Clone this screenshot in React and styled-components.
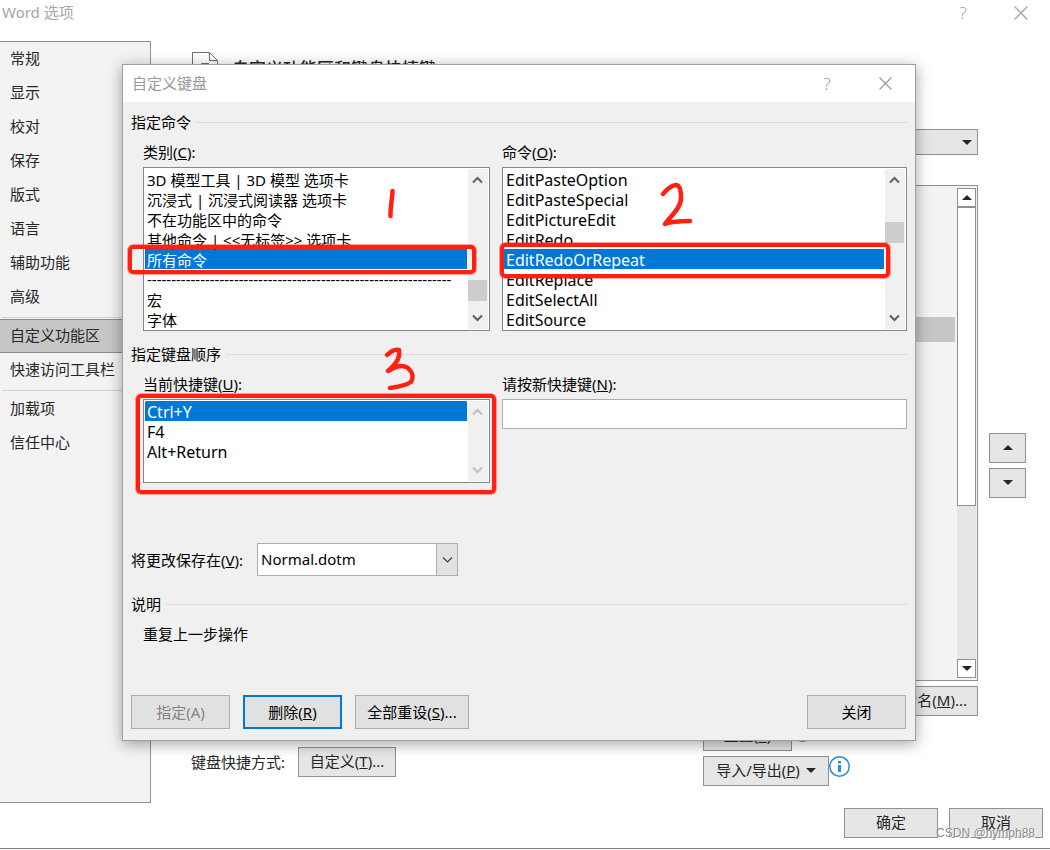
import React from 'react'
import styled, { createGlobalStyle } from 'styled-components'

const GlobalStyle = createGlobalStyle`
* {
  box-sizing: border-box;
}
body {
  margin: 0;
  background: #fff;
}
body, button, input, select {
  font-family: "Noto Sans", "Noto Sans CJK SC", sans-serif;
  font-size: 15px;
  line-height: 20px;
}
`
const Page = styled.div`
position: relative;
overflow: hidden;
border-bottom: 1px solid #808080;
padding-bottom: 10px;
color: #262626;
`
const TitleBar = styled.header`
display: flex;
align-items: center;
height: ${({$height}) => $height}px;
padding: ${({$pad}) => $pad};
background: #fff;
color: ${({$color}) => $color};
`
const Title = styled.h1`
flex: 1;
margin: 0;
padding-bottom: 2px;
font-size: 15px;
font-weight: normal;
`
const TitleButton = styled.button`
display: flex;
align-items: center;
justify-content: center;
width: 58px;
height: 24px;
padding: 0;
border: none;
background: none;
color: inherit;
font-size: 17px;
font-weight: 300;
`
const Columns = styled.div`
display: flex;
`
const Sidebar = styled.nav`
width: 151px;
min-height: 762px;
border: 1px solid #919191;
border-left: none;
background: #f3f3f3;
`
const NavItem = styled.a`
display: flex;
align-items: center;
height: 34px;
padding: 0 10px 2px;
color: #262626;
text-decoration: none;
white-space: nowrap;
border: solid ${({$active}) => $active ? '#8a8a8a' : 'transparent'};
border-width: 1px 0;
background: ${({$active}) => $active ? '#c6c6c6' : 'none'};
`
const NavLine = styled.hr`
height: 1px;
margin: 3px 2px 1px;
border: none;
background: #d1d1d1;
`
const Main = styled.main`
flex: 1;
padding: 11px 24px 17px 40px;
`
const Heading = styled.div`
display: flex;
align-items: center;
gap: 13px;
height: 34px;
margin-bottom: 43px;
`
const HeadingText = styled.h2`
margin: 0;
font-size: 17px;
font-weight: 500;
`
const Shortcuts = styled.div`
display: flex;
flex: 1;
align-items: center;
align-self: flex-end;
gap: 13px;
margin-bottom: 9px;
`
const RibbonColumn = styled.div`
display: flex;
flex-direction: column;
gap: 5px;
width: 275px;
`
const SelectBox = styled.div`
position: relative;
margin-bottom: 25px;
svg {
  position: absolute;
  right: 6px;
  top: 11px;
  pointer-events: none;
}
`
const FlatSelect = styled.select`
display: block;
width: 100%;
height: 26px;
padding: 0 8px;
appearance: none;
border: 1px solid #919191;
border-radius: 0;
background: #e6e6e6;
color: #262626;
`
const Tree = styled.div`
display: flex;
height: 496px;
padding: 2px 1px 2px 2px;
border: 1px solid #919191;
background: #f3f3f3;
`
const TreeRows = styled.div`
flex: 1;
padding: 129px 2px 0 0;
`
const TreeRow = styled.div`
height: 25px;
background: #c6c6c6;
`
const TreeScroll = styled.div`
display: flex;
flex-direction: column;
width: 19px;
background: #e6e6e6;
`
const TreeArrow = styled.button`
display: flex;
align-items: center;
justify-content: center;
height: 19px;
padding: 0;
border: 1px solid #919191;
background: #fff;
`
const TreeThumb = styled.div`
flex: 1;
margin-bottom: 153px;
border: 1px solid #919191;
background: #fff;
`
const Row = styled.div`
display: flex;
align-items: flex-start;
justify-content: ${({$end}) => $end ? 'flex-end' : 'flex-start'};
`
const FlatButton = styled.button`
display: flex;
align-items: center;
justify-content: center;
gap: 6px;
height: 30px;
min-width: ${({$width}) => $width || 0}px;
padding: 0 10px 2px;
border: 1px solid #919191;
background: #e6e6e6;
color: #262626;
white-space: nowrap;
`
const MoveColumn = styled.div`
display: flex;
flex-direction: column;
gap: 5px;
width: 37px;
margin: 304px 0 0 11px;
`
const Footer = styled.footer`
display: flex;
justify-content: flex-end;
gap: 11px;
padding: 5px 7px 0 0;
`
const Dialog = styled.section`
position: absolute;
top: 64px;
left: 122px;
right: 134px;
border: 1px solid #9e9e9e;
background: #f0f0f0;
box-shadow: 0 3px 14px rgba(0, 0, 0, 0.36);
color: #000;
`
const DialogBody = styled.div`
padding: 10px 8px 11px;
`
const Legend = styled.div`
display: flex;
align-items: center;
gap: 5px;
height: 20px;
margin-top: ${({$top}) => $top || 0}px;
&::after {
  content: "";
  flex: 1;
  height: 1px;
  background: #dcdcdc;
}
`
const Fields = styled.div`
display: grid;
grid-template-columns: minmax(0, 347fr) minmax(0, 405fr);
gap: 12px;
padding: 10px 0 0 12px;
`
const Label = styled.label`
display: block;
height: 20px;
margin-bottom: ${({$gap}) => $gap || 0}px;
white-space: nowrap;
`
const ListFrame = styled.div`
display: flex;
padding: 1px;
border: 1px solid #828790;
background: #fff;
`
const List = styled.select`
flex: 1;
min-width: 0;
height: ${({size}) => size * 20}px;
margin-right: 1px;
padding: 0;
border: none;
outline: none;
overflow: hidden;
background: #fff;
font-size: ${({$latin}) => $latin ? 16 : 15}px;
option {
  height: 20px;
  min-height: 20px;
  padding: ${({$latin}) => $latin ? '0 2px' : '0 2px 2px'};
  line-height: ${({$latin}) => $latin ? 20 : 18}px;
  white-space: nowrap;
  color: #000;
}
option:checked {
  background: #0078d7 linear-gradient(#0078d7, #0078d7);
  -webkit-text-fill-color: #fff;
}
`
const ScrollBar = styled.div`
display: flex;
flex-direction: column;
align-items: center;
justify-content: space-between;
width: 20px;
padding: 7px 1px 7px 0;
background: #f0f0f0;
color: ${({$off}) => $off ? '#bfbfbf' : '#606060'};
`
const Thumb = styled.div`
width: 19px;
height: 21px;
margin-top: ${({$push}) => $push}px;
margin-bottom: auto;
background: #cdcdcd;
`
const KeyInput = styled.input`
display: block;
width: 100%;
height: 30px;
padding: 0 4px;
border: 1px solid #abadb3;
border-radius: 0;
background: #fff;
`
const SaveRow = styled.div`
display: flex;
align-items: center;
gap: 14px;
margin-top: 60px;
`
const SaveBox = styled.div`
position: relative;
width: 201px;
`
const SaveSelect = styled.select`
display: block;
width: 100%;
height: 33px;
padding: 0 3px 2px;
appearance: none;
border: 1px solid #adadad;
border-radius: 0;
background: #fff;
color: #000;
`
const SaveArrow = styled.span`
position: absolute;
top: 0;
right: 0;
bottom: 0;
display: flex;
align-items: center;
justify-content: center;
width: 22px;
border: 1px solid #adadad;
background: #e1e1e1;
color: #404040;
pointer-events: none;
`
const Description = styled.p`
margin: 10px 12px 51px;
`
const Actions = styled.div`
display: flex;
gap: 13px;
padding-right: 1px;
`
const DialogButton = styled.button`
min-width: ${({$width}) => $width || 99}px;
height: 34px;
padding: 0 10px;
border: ${({$focus}) => $focus ? '2px solid #0078d7' : '1px solid #adadad'};
background: #e1e1e1;
color: #000;
white-space: nowrap;
&:disabled {
  color: #838383;
}
&:last-child {
  margin-left: auto;
}
`
const Marks = styled.div`
position: absolute;
inset: 0;
pointer-events: none;
svg {
  position: absolute;
  top: 0;
  left: 0;
}
`
const MarkBox = styled.div`
position: absolute;
left: ${({$x}) => $x}px;
top: ${({$y}) => $y}px;
width: ${({$w}) => $w}px;
height: ${({$h}) => $h}px;
border: 4px solid #ff2012;
border-radius: 5px;
box-shadow: 0 0 0 1px rgba(255, 32, 18, 0.4);
`
const Watermark = styled.span`
position: absolute;
right: 15px;
bottom: 7px;
font-family: "Liberation Sans", sans-serif;
font-size: 12px;
line-height: 16px;
color: #8c8c8c;
text-shadow: 1px 1px 0 #fff;
`

const Triangle = ({up}) => (
  <svg width="10" height="5" viewBox="0 0 10 5">
    <path d={up ? 'M0 5L5 0L10 5Z' : 'M0 0L5 5L10 0Z'} fill="#262626" />
  </svg>
)

const Chevron = ({up, thin}) => (
  <svg width="11" height="8" viewBox="0 0 11 8">
    <path d={up ? 'M1 6.5L5.5 2L10 6.5' : 'M1 1.5L5.5 6L10 1.5'} fill="none" stroke="currentColor" strokeWidth={thin ? 1.2 : 2} />
  </svg>
)

const Cross = ({size}) => (
  <svg width={size} height={size} viewBox="0 0 13 13">
    <path d="M0.5 0.5L12.5 12.5M12.5 0.5L0.5 12.5" fill="none" stroke="currentColor" strokeWidth="1.2" />
  </svg>
)

const PageIcon = () => (
  <svg width="28" height="34" viewBox="0 0 28 34">
    <path d="M1.500 33.500V0.500H18.500L26.500 8.500V33.500ZM18.500 0.500V8.500H26.500" fill="#fff" stroke="#6e6e6e" />
    <path d="M10.500 18V11.500H17.500V18" fill="none" stroke="#6e6e6e" />
  </svg>
)

const Info = () => (
  <svg width="21" height="21" viewBox="0 0 21 21">
    <circle cx="10.5" cy="10.5" r="9.7" fill="#fff" stroke="#2e8fd0" strokeWidth="1.5" />
    <path d="M9 5H12V7.5H9ZM9 9H12V16H9Z" fill="#2e8fd0" />
  </svg>
)

const navGroups = [
  ['常规', '显示', '校对', '保存', '版式', '语言', '辅助功能', '高级'],
  ['自定义功能区', '快速访问工具栏'],
  ['加载项', '信任中心'],
]

const categories = [
  '3D 模型工具 | 3D 模型 选项卡',
  '沉浸式 | 沉浸式阅读器 选项卡',
  '不在功能区中的命令',
  '其他命令 | <<无标签>> 选项卡',
  '所有命令',
  '-'.repeat(63),
  '宏',
  '字体',
]

const commands = [
  'EditPasteOption',
  'EditPasteSpecial',
  'EditPictureEdit',
  'EditRedo',
  'EditRedoOrRepeat',
  'EditReplace',
  'EditSelectAll',
  'EditSource',
]

const ListBox = ({id, items, value, rows, push, latin}) => (
  <ListFrame>
    <List id={id} size={rows} defaultValue={value} $latin={latin}>
      {items.map((item) => <option key={item} value={item}>{item}</option>)}
    </List>
    <ScrollBar $off={push === undefined}>
      <Chevron up />
      {push !== undefined && <Thumb $push={push} />}
      <Chevron />
    </ScrollBar>
  </ListFrame>
)

const KeyboardDialog = () => (
  <Dialog role="dialog" aria-label="自定义键盘">
    <TitleBar $height={37} $pad="0 1px 0 9px" $color="#999">
      <Title as="h3">自定义键盘</Title>
      <TitleButton>?</TitleButton>
      <TitleButton aria-label="关闭窗口"><Cross size={13} /></TitleButton>
    </TitleBar>
    <DialogBody>
      <Legend>指定命令</Legend>
      <Fields>
        <div>
          <Label htmlFor="category" $gap={5}>类别(<u>C</u>):</Label>
          <ListBox id="category" items={categories} value="所有命令" rows={8} push={96} />
        </div>
        <div>
          <Label htmlFor="command" $gap={5}>命令(<u>O</u>):</Label>
          <ListBox id="command" items={commands} value="EditRedoOrRepeat" rows={8} push={38} latin />
        </div>
      </Fields>
      <Legend $top={13}>指定键盘顺序</Legend>
      <Fields>
        <div>
          <Label htmlFor="current" $gap={5}>当前快捷键(<u>U</u>):</Label>
          <ListBox id="current" items={['Ctrl+Y', 'F4', 'Alt+Return']} value="Ctrl+Y" rows={4} latin />
        </div>
        <div>
          <Label htmlFor="newkey" $gap={5}>请按新快捷键(<u>N</u>):</Label>
          <KeyInput id="newkey" type="text" />
        </div>
      </Fields>
      <SaveRow>
        <Label htmlFor="savein">将更改保存在(<u>V</u>):</Label>
        <SaveBox>
          <SaveSelect id="savein"><option>Normal.dotm</option></SaveSelect>
          <SaveArrow><Chevron thin /></SaveArrow>
        </SaveBox>
      </SaveRow>
      <Legend $top={18}>说明</Legend>
      <Description>重复上一步操作</Description>
      <Actions>
        <DialogButton disabled>指定(A)</DialogButton>
        <DialogButton $focus>删除(<u>R</u>)</DialogButton>
        <DialogButton $width={114}>全部重设(<u>S</u>)...</DialogButton>
        <DialogButton>关闭</DialogButton>
      </Actions>
    </DialogBody>
  </Dialog>
)

const App = () => {
  return (
    <Page>
      <GlobalStyle />
      <TitleBar $height={41} $pad="0 0 16px 2px" $color="#a6a6a6">
        <Title>Word 选项</Title>
        <TitleButton>?</TitleButton>
        <TitleButton aria-label="关闭"><Cross size={14} /></TitleButton>
      </TitleBar>
      <Columns>
        <Sidebar>
          {navGroups.map((group, i) => (
            <React.Fragment key={i}>
              {i > 0 && <NavLine />}
              {group.map((name) => (
                <NavItem key={name} href="#" $active={name === '自定义功能区'}>{name}</NavItem>
              ))}
            </React.Fragment>
          ))}
        </Sidebar>
        <Main>
          <Heading>
            <PageIcon />
            <HeadingText>自定义功能区和键盘快捷键</HeadingText>
          </Heading>
          <Columns>
            <Shortcuts>
              <span>键盘快捷方式:</span>
              <FlatButton $width={98}><span>自定义(<u>T</u>)...</span></FlatButton>
            </Shortcuts>
            <RibbonColumn>
              <SelectBox>
                <FlatSelect aria-label="自定义功能区" />
                <Triangle />
              </SelectBox>
              <Tree>
                <TreeRows><TreeRow /></TreeRows>
                <TreeScroll>
                  <TreeArrow aria-label="向上滚动"><Triangle up /></TreeArrow>
                  <TreeThumb />
                  <TreeArrow aria-label="向下滚动"><Triangle /></TreeArrow>
                </TreeScroll>
              </Tree>
              <Row $end>
                <FlatButton><span>重命名(<u>M</u>)...</span></FlatButton>
              </Row>
              <Row>
                <FlatButton $width={89}><span>重置(<u>E</u>)</span></FlatButton>
                <Info />
              </Row>
              <Row>
                <FlatButton $width={126}><span>导入/导出(<u>P</u>)</span> <Triangle /></FlatButton>
                <Info />
              </Row>
            </RibbonColumn>
            <MoveColumn>
              <FlatButton aria-label="上移"><Triangle up /></FlatButton>
              <FlatButton aria-label="下移"><Triangle /></FlatButton>
            </MoveColumn>
          </Columns>
        </Main>
      </Columns>
      <Footer>
        <FlatButton $width={94}>确定</FlatButton>
        <FlatButton $width={94}>取消</FlatButton>
      </Footer>
      <KeyboardDialog />
      <Marks>
        <MarkBox $x={128} $y={245} $w={348} $h={29} />
        <MarkBox $x={500} $y={243} $w={390} $h={35} />
        <MarkBox $x={136} $y={394} $w={360} $h={100} />
        <svg width="700" height="400" viewBox="0 0 700 400" fill="none" stroke="#ff2012" strokeWidth="4.5" strokeLinecap="round" strokeLinejoin="round">
          <path d="M392.500 191C392.500 198 390 208 390.500 216" />
          <path d="M663 194C667 190 669 186 676 185C680 185 681 190 681 198C681 207 673 214 665 224C673 221 682 221 690 221" />
          <path d="M387 355C391 351 396 349 399 350C400 357 398 362 388 371C396 366 403 364 408 368C413 373 414 377 411 382C405 386 398 387 390 388" />
        </svg>
      </Marks>
      <Watermark>CSDN @nymph88</Watermark>
    </Page>
  )
}

export default App
